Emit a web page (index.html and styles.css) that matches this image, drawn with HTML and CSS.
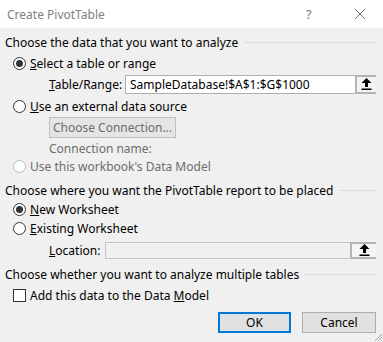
FILE: index.html
```html
<!DOCTYPE html>
<html lang="en">
<head>
  <meta charset="UTF-8">
  <title>Create PivotTable</title>
  <link rel="stylesheet" href="styles.css">
</head>
<body>
  <div class="dialog">
    <!-- Title Bar -->
    <div class="titlebar">
      <span class="title">Create PivotTable</span>
      <span class="help">?</span>
      <svg class="close" width="12" height="12" viewBox="0 0 12 12">
        <path d="M1 1 L11 11 M11 1 L1 11" stroke="#777" stroke-width="1" fill="none"/>
      </svg>
    </div>

    <div class="content">
      <!-- Section: data source -->
      <div class="group-head"><span>Choose the data that you want to analyze</span></div>

      <label class="option first">
        <span class="radio checked"></span>
        <span><u>S</u>elect a table or range</span>
      </label>
      <div class="field-row range-row">
        <span class="field-label"><u>T</u>able/Range:</span>
        <div class="ref-box">
          <span class="ref-text">SampleDatabase!$A$1:$G$1000</span>
          <span class="ref-btn">
            <svg width="11" height="12" viewBox="0 0 11 12"><path d="M5.5 0 L10.5 5 L7 5 L7 9 L4 9 L4 5 L0.5 5 Z" fill="#000"/><rect x="0.5" y="10.5" width="10" height="1.5" fill="#000"/></svg>
          </span>
        </div>
      </div>
      <label class="option ext">
        <span class="radio"></span>
        <span><u>U</u>se an external data source</span>
      </label>
      <div class="conn-row">
        <button class="conn-btn" type="button" disabled>Choose Connection...</button>
      </div>
      <div class="conn-name">Connection name:</div>
      <label class="option disabled model">
        <span class="radio"></span>
        <span>Use this workbook's Data Model</span>
      </label>

      <!-- Section: placement -->
      <div class="group-head second"><span>Choose where you want the PivotTable report to be placed</span></div>
      <label class="option new">
        <span class="radio checked"></span>
        <span><u>N</u>ew Worksheet</span>
      </label>
      <label class="option existing">
        <span class="radio"></span>
        <span><u>E</u>xisting Worksheet</span>
      </label>
      <div class="field-row loc-row">
        <span class="field-label"><u>L</u>ocation:</span>
        <div class="ref-box off">
          <span class="ref-text"></span>
          <span class="ref-btn">
            <svg width="11" height="12" viewBox="0 0 11 12"><path d="M5.5 0 L10.5 5 L7 5 L7 9 L4 9 L4 5 L0.5 5 Z" fill="#000"/><rect x="0.5" y="10.5" width="10" height="1.5" fill="#000"/></svg>
          </span>
        </div>
      </div>

      <!-- Section: data model -->
      <div class="group-head third"><span>Choose whether you want to analyze multiple tables</span></div>
      <label class="option check-row">
        <span class="checkbox"></span>
        <span>Add this data to the Data <u>M</u>odel</span>
      </label>

      <div class="actions">
        <button class="btn default" type="button">OK</button>
        <button class="btn" type="button">Cancel</button>
      </div>
    </div>

    <svg class="grip" width="10" height="10" viewBox="0 0 10 10">
      <path d="M9 2 L2 9 M9 5 L5 9 M9 8 L8 9" stroke="#a0a0a0" stroke-width="1" fill="none"/>
    </svg>
  </div>
</body>
</html>
```

FILE: styles.css
```css
* { box-sizing: border-box; margin: 0; padding: 0; }
html, body {
  width: 383px;
  height: 342px;
  overflow: hidden;
  font-family: 'Noto Sans', 'Liberation Sans', sans-serif;
  font-size: 12px;
  color: #000;
  background: #f0f0f0;
}

.dialog {
  position: relative;
  height: 342px;
  background: #f0f0f0;
}

/* Title Bar */
.titlebar {
  height: 28px;
  background: #fff;
  display: flex;
  align-items: center;
  padding-left: 7px;
  color: #808080;
}
.titlebar .title { flex: 1; font-size: 12px; }
.titlebar .help { width: 14px; margin-right: 34px; font-size: 13px; color: #808080; }
.titlebar .close { margin-right: 17px; }

.content { padding: 0 7px 0 5px; }

/* Group headings with rule */
.group-head {
  display: flex;
  align-items: center;
  height: 18px;
  margin-top: 5px;
  gap: 6px;
}
.group-head::after {
  content: '';
  flex: 1;
  height: 1px;
  background: #dcdcdc;
}
.group-head.second { margin-top: 6px; }
.group-head.third { margin-top: 6px; }

/* Radio / checkbox rows */
.option {
  display: flex;
  align-items: center;
  gap: 4px;
  height: 19px;
  padding-left: 8px;
}
.option.first { margin-top: 2px; height: 20px; }
.option.ext { margin-top: 2px; height: 20px; }
.option.model { height: 18px; }
.option.new { margin-top: 1px; }
.option.check-row { margin-top: 3px; height: 18px; padding-left: 8px; }
.option.disabled { color: #6d6d6d; }

.radio {
  width: 13px;
  height: 13px;
  border: 1px solid #333;
  border-radius: 50%;
  background: #fff;
  display: flex;
  align-items: center;
  justify-content: center;
}
.radio.checked::after {
  content: '';
  width: 7px;
  height: 7px;
  border-radius: 50%;
  background: #333;
}
.option.disabled .radio { border-color: #bcbcbc; }

.checkbox {
  width: 13px;
  height: 13px;
  border: 1px solid #333;
  background: #fff;
}

/* Reference fields */
.field-row {
  display: flex;
  align-items: center;
  padding-left: 44px;
}
.range-row { margin-top: 1px; height: 20px; }
.loc-row { margin-top: 3px; height: 18px; }
.field-label { width: 76px; }
.loc-row .field-label { width: 56px; }

.ref-box {
  flex: 1;
  display: flex;
  height: 19px;
  border: 1px solid #adadad;
  background: #fff;
}
.ref-box.off { height: 17px; background: #f0f0f0; border-color: #c4c4c4; }
.ref-text {
  flex: 1;
  padding-left: 4px;
  line-height: 17px;
  white-space: nowrap;
  overflow: hidden;
}
.ref-box.off .ref-text { background: #f0f0f0; }
.ref-btn {
  width: 21px;
  border: 2px solid #b4b4b4;
  border-right: 0;
  margin: -1px -1px -1px 0;
  background: #f4f4f4;
  display: flex;
  align-items: center;
  justify-content: center;
}
.ref-box.off .ref-btn { width: 26px; }

/* Choose Connection */
.conn-row { padding-left: 44px; margin-top: 1px; height: 21px; display: flex; }
.conn-btn {
  width: 127px;
  height: 21px;
  font-family: inherit;
  font-size: 12px;
  color: #6d6d6d;
  background: #e5e5e5;
  border: 1px solid #bfbfbf;
}
.conn-name {
  padding-left: 44px;
  margin-top: 3px;
  height: 16px;
  line-height: 16px;
  color: #6d6d6d;
}

/* Buttons */
.actions {
  display: flex;
  justify-content: flex-end;
  gap: 11px;
  margin-top: 8px;
}
.btn {
  width: 74px;
  height: 21px;
  font-family: inherit;
  font-size: 12px;
  color: #000;
  background: #e1e1e1;
  border: 1px solid #adadad;
}
.btn.default { width: 73px; border: 2px solid #0078d7; }

.grip {
  position: absolute;
  right: 0;
  bottom: 0;
}
```
